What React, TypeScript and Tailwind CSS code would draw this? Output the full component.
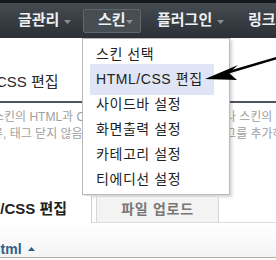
const Caret = ({ color = "#8a9196" }: { color?: string }) => (
  <svg width="7" height="4" viewBox="0 0 7 4" className="mt-[2px] shrink-0">
    <path d="M0 0 L7 0 L3.5 4 Z" fill={color} />
  </svg>
);

const menuItems = ["스킨 선택", "HTML/CSS 편집", "사이드바 설정", "화면출력 설정", "카테고리 설정", "티에디선 설정"];

export default function App() {
  return (
    <div className="relative w-[276px] h-[260px] overflow-hidden bg-white font-['Liberation_Sans','Noto_Sans_CJK_KR',sans-serif]">
      {/* top nav */}
      <div className="h-[38px] border-t-[3px] border-[#16191c] bg-gradient-to-b from-[#454c52] to-[#2a3035] flex items-center text-[15px] font-bold text-[#eef1f3] whitespace-nowrap">
        <div className="w-[83px] pl-[18px] pr-[12px] flex items-center justify-between">
          <span>글관리</span>
          <Caret />
        </div>
        <div className="w-[58px] h-[24px] flex items-center justify-between pl-[14px] pr-[9px] rounded-[2px] border border-[#5f676d] bg-[#464e54]">
          <span>스킨</span>
          <Caret />
        </div>
        <div className="ml-[16px] w-[91px] pr-[24px] flex items-center justify-between">
          <span>플러그인</span>
          <Caret />
        </div>
        <span>링크</span>
      </div>

      {/* page content */}
      <div className="pt-[31px]">
        <div className="ml-[-49px] h-[26px] text-[15px] leading-[26px] text-[#2a2a2a] whitespace-nowrap">HTML/CSS 편집</div>
        <div className="mt-[6px] h-[2px] bg-[#4d565e]" />
        <div className="mt-[6px] text-[12px] leading-[17px] text-[#a0a0a0] whitespace-nowrap">
          <div className="ml-[-7px]">스킨의 HTML과 CSS를 편집 가능합니다. 빼거나 스킨의 구조를</div>
          <div className="ml-[-8px]">류, 태그 닫지 않음등으로 레이아웃이 깨지면 태그를 추가하</div>
        </div>

        {/* tabs */}
        <div className="mt-[53px] h-[26px] flex items-stretch whitespace-nowrap relative z-10">
          <div className="ml-[-60px] w-[152px] border-r border-[#cfcfcf] bg-white flex items-center justify-end pr-[24px] -mb-px">
            <span className="text-[15px] font-bold text-[#222]">HTML/CSS 편집</span>
          </div>
          <div className="ml-[4px] w-[123px] border-x border-t border-[#d8d8d8] bg-[#f3f3f3] flex items-center justify-center text-[14px] font-bold text-[#777] tracking-[0.05em]">
            파일 업로드
          </div>
        </div>
        <div className="h-[36px] border-t border-[#dcdcdc] border-b border-b-[#b0b0b0] bg-gradient-to-b from-white to-[#f4f4f4] flex items-end">
          <span className="ml-[-8px] mb-[-2px] text-[14px] leading-[20px] font-bold text-[#2e5f86]">html</span>
          <svg width="7" height="4" viewBox="0 0 7 4" className="ml-[6px] mb-[6px]">
            <path d="M0 4 L7 4 L3.5 0 Z" fill="#2e5f86" />
          </svg>
        </div>
      </div>

      {/* dropdown */}
      <div className="absolute left-[82px] top-[38px] w-[148px] h-[157px] bg-white border border-[#b9b9b9] shadow-[2px_2px_3px_rgba(0,0,0,0.18)] pt-[3px] text-[14px] text-[#222] tracking-[0.04em] whitespace-nowrap">
        {menuItems.map((item, i) =>
          i === 1 ? (
            <div key={item} className="mx-[7px] -my-[3px] w-[124px] h-[31px] pl-[6px] flex items-center bg-[#dfe5f5] rounded-[1px]">
              {item}
            </div>
          ) : (
            <div key={item} className="ml-[7px] h-[25px] pl-[6px] flex items-center">
              {item}
            </div>
          )
        )}
      </div>

      {/* arrow */}
      <svg className="absolute left-0 top-0" width="276" height="260" viewBox="0 0 276 260">
        <line x1="277" y1="58" x2="226" y2="73" stroke="#000" strokeWidth="2.5" />
        <path d="M205 79 L238 65 L229 73 L237 80 Z" fill="#000" />
      </svg>
    </div>
  );
}
